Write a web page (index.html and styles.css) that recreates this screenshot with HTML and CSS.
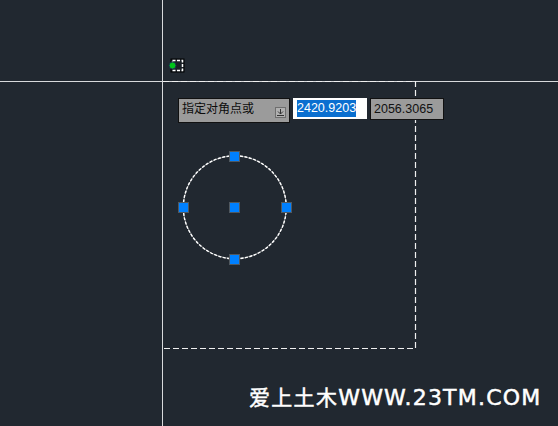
FILE: index.html
```html
<!DOCTYPE html>
<html lang="en">
<head>
  <meta charset="UTF-8" />
  <title>指定对角点</title>
  <link rel="stylesheet" href="styles.css">
</head>
<body>
  <div class="canvas">
    <svg class="drawing" width="558" height="426" viewBox="0 0 558 426">
      <path class="cross" d="M162.500 0V426M0 81.500H558"></path>
      <path class="window-box" d="M163 81.500H415.500V348.500H163"></path>
      <rect class="pick-back" x="171" y="59" width="13" height="13"></rect>
      <rect class="pick-dash" x="172.500" y="60.500" width="10" height="10"></rect>
      <circle class="snap-dot" cx="172.500" cy="65.500" r="3.500"></circle>
      <circle class="circle-base" cx="234.800" cy="207.300" r="51.500"></circle>
      <circle class="circle-dash" cx="234.800" cy="207.300" r="51.500"></circle>
    </svg>

    <div class="grip grip-top"></div>
    <div class="grip grip-left"></div>
    <div class="grip grip-center"></div>
    <div class="grip grip-right"></div>
    <div class="grip grip-bottom"></div>

    <div class="prompt">
      <span class="prompt-label">指定对角点或</span>
      <span class="prompt-icon">
        <svg width="9" height="9" viewBox="0 0 9 9">
          <path d="M4.500 1V6M2 3.500L4.500 6L7 3.500M1 7.500H8" fill="none" stroke="#333" stroke-width="1"></path>
        </svg>
      </span>
    </div>
    <div class="coord coord-active"><span class="selected">2420.9203</span></div>
    <div class="coord coord-idle">2056.3065</div>

    <div class="watermark"><span class="watermark-cn">爱上土木</span>WWW.23TM.COM</div>
  </div>
</body>
</html>
```

FILE: styles.css
```css
html, body {
  margin: 0;
  padding: 0;
}

.canvas {
  position: relative;
  width: 558px;
  height: 426px;
  overflow: hidden;
  background: #212830;
  font-family: 'Liberation Sans', 'Noto Sans CJK SC', sans-serif;
}

.drawing {
  position: absolute;
  left: 0;
  top: 0;
}

.cross {
  fill: none;
  stroke: #d8dadc;
  stroke-width: 1;
}

.window-box {
  fill: none;
  stroke: #f0f0f0;
  stroke-width: 1.200;
  stroke-dasharray: 6 3;
}

.pick-back {
  fill: #1a2026;
  stroke: #000;
  stroke-width: 1;
}

.pick-dash {
  fill: #1a2026;
  stroke: #fff;
  stroke-width: 1.500;
  stroke-dasharray: 3 1.500;
}

.snap-dot {
  fill: #00c41a;
  stroke: #17324a;
  stroke-width: 1;
}

.circle-base {
  fill: none;
  stroke: #8d9092;
  stroke-width: 1;
}

.circle-dash {
  fill: none;
  stroke: #fff;
  stroke-width: 1.400;
  stroke-dasharray: 3 1.500;
}

.grip {
  position: absolute;
  width: 9px;
  height: 9px;
  background: #0080ff;
  border: 1px solid #50585f;
}

.grip-top { left: 229px; top: 151px; }
.grip-left { left: 178px; top: 202px; }
.grip-center { left: 229px; top: 202px; }
.grip-right { left: 281px; top: 202px; }
.grip-bottom { left: 229px; top: 254px; }

.prompt {
  position: absolute;
  left: 178px;
  top: 98px;
  width: 110px;
  height: 23px;
  display: flex;
  justify-content: space-between;
  border: 1px solid #111;
  background: #9b9b9b;
  color: #0c0c0c;
  font-size: 12px;
}

.prompt-label {
  padding: 2px 0 0 3px;
  line-height: 16px;
}

.prompt-icon {
  width: 9px;
  height: 9px;
  margin: 8px 3px 0 0;
  display: flex;
  border: 1px solid #6e6e6e;
  background: #b0b0b0;
}

.coord {
  position: absolute;
  top: 98px;
  display: flex;
  align-items: center;
  font-size: 12.500px;
  line-height: 17px;
}

.coord-active {
  left: 293px;
  width: 70px;
  height: 21px;
  padding-left: 4px;
  background: #fff;
}

.selected {
  background: #0a6fd0;
  color: #fff;
}

.coord-idle {
  left: 370px;
  width: 69px;
  height: 20px;
  padding-left: 3px;
  border: 1px solid #111;
  background: #9b9b9b;
  color: #111;
}

.watermark {
  position: absolute;
  left: 249px;
  top: 384px;
  color: #fff;
  font-family: 'DejaVu Sans', 'Noto Sans CJK SC', sans-serif;
  font-size: 22px;
  line-height: 28px;
  letter-spacing: 1.200px;
  -webkit-text-stroke: 0.500px #fff;
  white-space: nowrap;
}

.watermark-cn {
  font-size: 21px;
  letter-spacing: 1.300px;
}
```
